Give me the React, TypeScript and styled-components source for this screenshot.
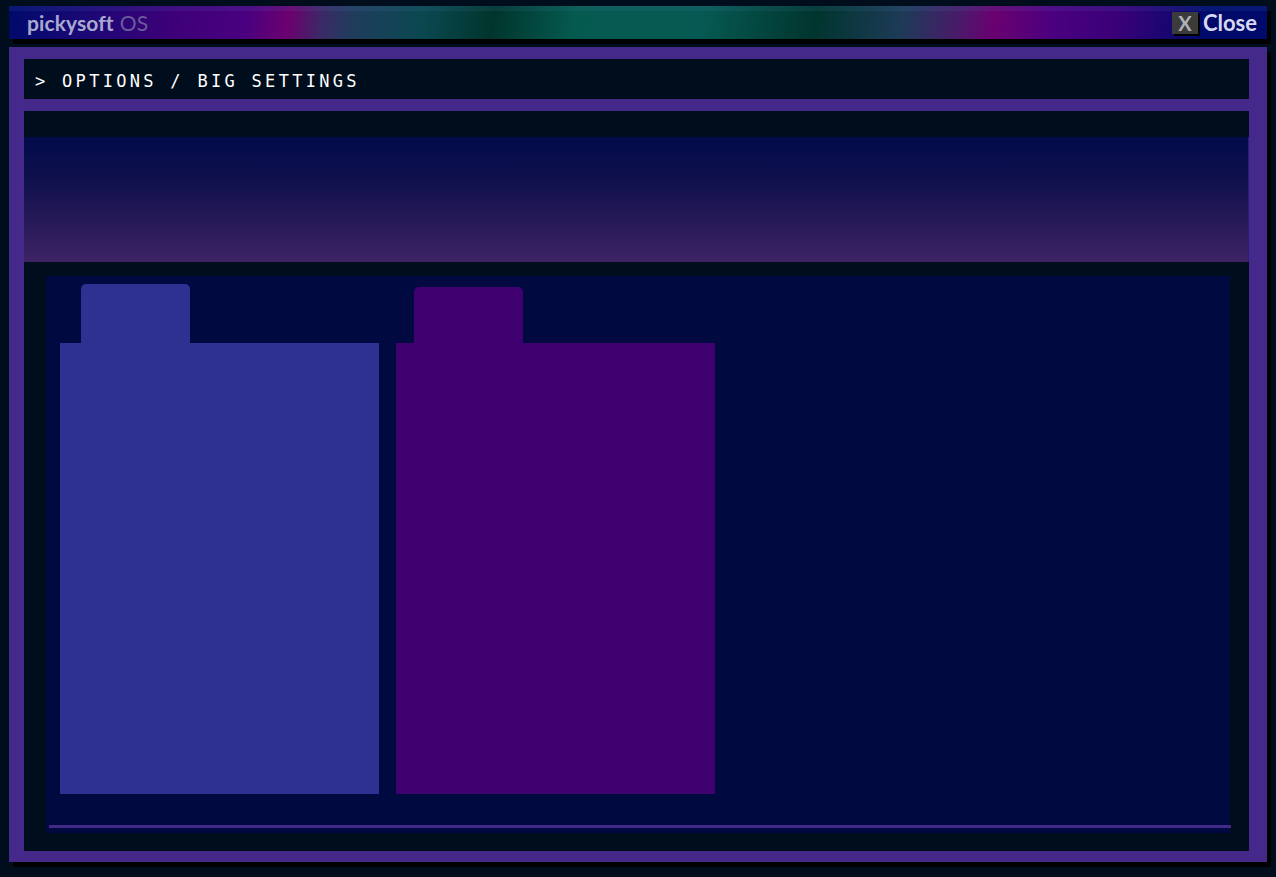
import React from 'react';
import styled, { createGlobalStyle } from 'styled-components';

const GlobalStyle = createGlobalStyle`
  html, body {
    margin: 0;
    padding: 0;
    background: #000d1d;
  }
  * {
    box-sizing: border-box;
  }
`;

const Desktop = styled.div`
  display: flex;
  flex-direction: column;
  gap: 8px;
  width: 1276px;
  height: 877px;
  padding: 6px 9px 0 9px;
  background: #000d1d;
  overflow: hidden;
`;

const TitleBar = styled.div`
  position: relative;
  display: flex;
  align-items: center;
  justify-content: space-between;
  height: 33px;
  padding: 0 10px 0 18px;
  box-shadow: 4px 5px 0 #000;
  background: linear-gradient(
    98deg,
    #000a6a 0%,
    #1a0876 6%,
    #3d0078 13%,
    #4a0080 19%,
    #6c006f 22.3%,
    #3a2a66 25%,
    #1f3d5c 27.5%,
    #0a4850 33%,
    #00352c 38.5%,
    #055a50 45%,
    #065a53 55%,
    #00352e 64%,
    #1e3a58 71%,
    #4a1a6a 75.5%,
    #6a0070 78.2%,
    #4a0080 83%,
    #3a0078 88%,
    #000a6a 95%,
    #000a6a 100%
  );

  &::before {
    content: '';
    position: absolute;
    left: 0;
    right: 0;
    top: 0;
    height: 5px;
    background: rgba(90, 150, 210, 0.1);
    pointer-events: none;
  }
`;

const Brand = styled.div`
  font-family: Lato, 'Open Sans', sans-serif;
  font-size: 21px;
  color: #a9a9cf;
  letter-spacing: 0.1px;

  b {
    font-weight: 700;
  }

  span {
    font-weight: 400;
    color: #6a5b9c;
    margin-left: 6px;
  }
`;

const CloseButton = styled.button`
  display: flex;
  align-items: center;
  gap: 5px;
  padding: 0;
  border: none;
  background: transparent;
  cursor: pointer;
  font-family: Lato, 'Open Sans', sans-serif;
  font-size: 22px;
  font-weight: 700;
  color: #d8d8f0;
`;

const CloseKey = styled.span`
  display: flex;
  align-items: center;
  justify-content: center;
  width: 26px;
  height: 22px;
  background: #3b3b3b;
  color: #b0b0b8;
  box-shadow: 2px 2px 0 #000;
  font-size: 20px;
`;

const Window = styled.div`
  display: flex;
  flex-direction: column;
  gap: 12px;
  height: 815px;
  padding: 12px 18px 11px 15px;
  background: #45298a;
  box-shadow: 4px 5px 0 #000;
`;

const PathBar = styled.div`
  display: flex;
  align-items: center;
  height: 40px;
  padding: 3px 0 0 11px;
  background: #000d1d;
  color: #ffffff;
  font-family: 'DejaVu Sans Mono', 'Liberation Mono', monospace;
  font-size: 17px;
  letter-spacing: 3.3px;
  white-space: pre;
`;

const Content = styled.div`
  flex: 1;
  display: flex;
  flex-direction: column;
  padding: 26px 0 18px 0;
  background: #000d1d;
`;

const Banner = styled.div`
  height: 125px;
  background: linear-gradient(to bottom, #020a4a 0%, #12124e 40%, #3f2365 100%);
  border-right: 1px solid #2a1f78;
`;

const Panel = styled.div`
  flex: 1;
  display: flex;
  flex-direction: column;
  margin: 14px 19px 0 22px;
  padding: 8px 0 5px 14px;
  background: #000a40;
`;

const CardRow = styled.div`
  display: flex;
  align-items: flex-end;
  gap: 17px;
  height: 510px;
`;

const Card = styled.div`
  display: flex;
  flex-direction: column;
  width: 319px;
`;

const CardTab = styled.div<{ $color: string; $offset: number; $height: number }>`
  width: 109px;
  height: ${p => p.$height}px;
  margin-left: ${p => p.$offset}px;
  border-radius: 5px 5px 0 0;
  background: ${p => p.$color};
`;

const CardBody = styled.div<{ $color: string }>`
  height: 451px;
  background: ${p => p.$color};
`;

const Rule = styled.div`
  height: 3px;
  margin: 31px -1px 0 -11px;
  background: #45298a;
`;

const folders = [
  { color: '#2e3192', offset: 21, tab: 59 },
  { color: '#400070', offset: 18, tab: 56 },
];

export default function App() {
  return (
    <>
      <GlobalStyle />
      <Desktop>
        <TitleBar>
          <Brand>
            <b>pickysoft</b>
            <span>OS</span>
          </Brand>
          <CloseButton>
            <CloseKey>X</CloseKey>
            Close
          </CloseButton>
        </TitleBar>

        <Window>
          <PathBar>{'> OPTIONS / BIG SETTINGS'}</PathBar>
          <Content>
            <Banner />
            <Panel>
              <CardRow>
                {folders.map((f, i) => (
                  <Card key={i}>
                    <CardTab $color={f.color} $offset={f.offset} $height={f.tab} />
                    <CardBody $color={f.color} />
                  </Card>
                ))}
              </CardRow>
              <Rule />
            </Panel>
          </Content>
        </Window>
      </Desktop>
    </>
  );
}
